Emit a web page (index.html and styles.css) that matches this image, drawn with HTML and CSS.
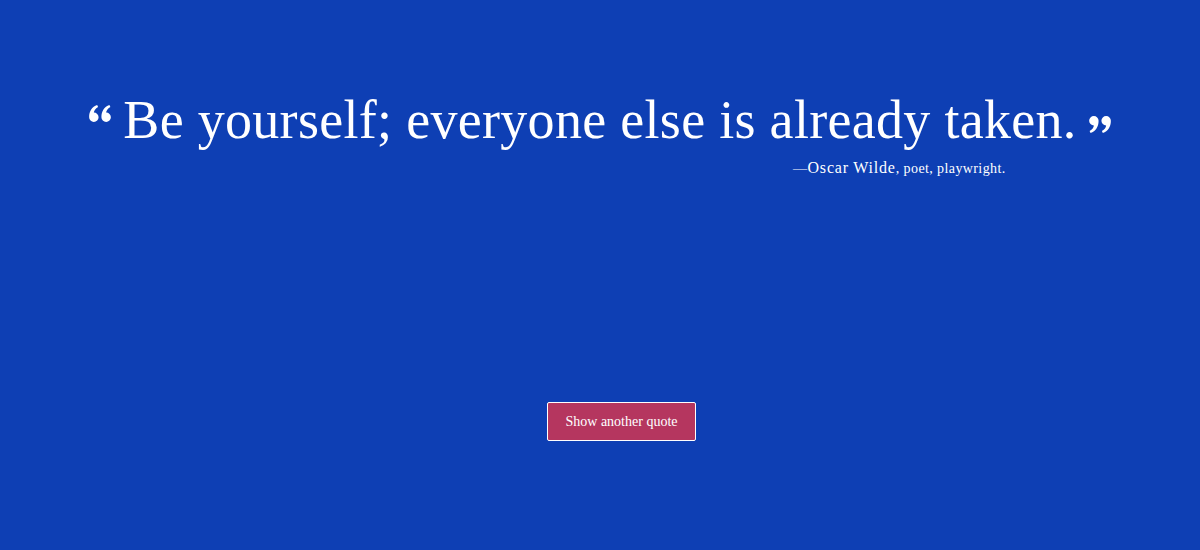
FILE: index.html
```html
<!DOCTYPE html>
<html>
<head>
<meta charset="utf-8">
<link rel="stylesheet" href="styles.css">
</head>
<body>
<main class="page">
  <section class="quote-box">
    <p class="quote">
      <svg class="qmark qleft" viewBox="0 0 23 18" width="22" height="17"><path fill="#fff" d="M0 13C0 6.5 3 2 8.5 0l1 2C6.5 3.8 5.2 5.8 5 8A5 5 0 1 1 0 13ZM13 13C13 6.5 16 2 21.5 0l1 2C19.5 3.8 18.2 5.8 18 8A5 5 0 1 1 13 13Z"/></svg>
      <span class="text">Be yourself; everyone else is already taken.</span>
      <svg class="qmark qright" viewBox="0 0 23 18" width="22" height="17"><path fill="#fff" transform="rotate(180 11.5 9)" d="M0 13C0 6.5 3 2 8.5 0l1 2C6.5 3.8 5.2 5.8 5 8A5 5 0 1 1 0 13ZM13 13C13 6.5 16 2 21.5 0l1 2C19.5 3.8 18.2 5.8 18 8A5 5 0 1 1 13 13Z"/></svg>
    </p>
    <p class="author">—<span class="name">Oscar Wilde</span>, <span class="role">poet, playwright.</span></p>
  </section>
  <div class="actions">
    <button class="btn">Show another quote</button>
  </div>
</main>
</body>
</html>
```
FILE: styles.css
```css
html, body {
  margin: 0;
  padding: 0;
  background: #0e3fb4;
  color: #fff;
  font-family: "Liberation Serif", "DejaVu Serif", serif;
}
.page {
  height: 550px;
  display: flex;
  flex-direction: column;
  align-items: center;
}
.quote-box {
  margin-top: 88px;
  display: flex;
  flex-direction: column;
}
.quote {
  margin: 0;
  display: flex;
  align-items: flex-start;
  gap: 12px;
  white-space: nowrap;
}
.text {
  font-size: 54px;
  line-height: 64px;
  letter-spacing: 0.3px;
}
.qmark { flex: none; }
.qleft { margin-top: 17px; }
.qright { margin-top: 28px; }
.author {
  margin: 7px 105px 0 0;
  text-align: right;
  font-size: 14px;
  letter-spacing: 0.4px;
}
.author .name {
  font-size: 16px;
  letter-spacing: 0.8px;
}
.actions {
  margin-top: 225px;
  padding-left: 43px;
}
.btn {
  background: #b5365f;
  color: #fff;
  border: 1px solid #fff;
  border-radius: 2px;
  font-family: "Liberation Serif", "DejaVu Serif", serif;
  font-size: 14px;
  width: 149px;
  height: 39px;
  padding: 0;
}
```
